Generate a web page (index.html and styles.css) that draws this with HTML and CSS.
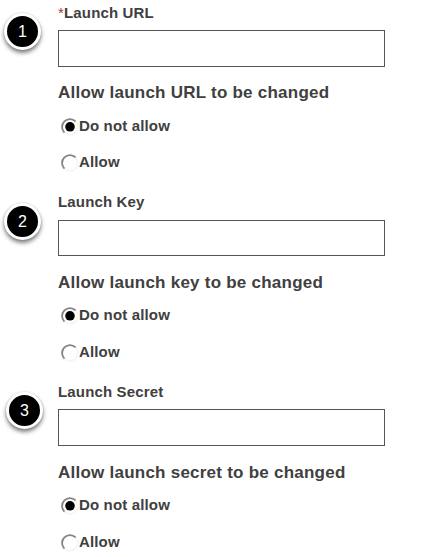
FILE: index.html
```
<!DOCTYPE html>
<html lang="en">
<head>
<meta charset="utf-8">
<title>Launch settings</title>
<link rel="stylesheet" href="styles.css">
</head>
<body>
<svg class="defs" aria-hidden="true">
  <symbol id="radio" viewBox="0 0 18 18">
    <circle cx="9" cy="9" r="7.9" fill="#fff" stroke="#f5f5f5" stroke-width="1.6"/>
    <path d="M3.4 14.6A7.9 7.9 0 0 1 14.6 3.4" fill="none" stroke="#838383" stroke-width="1.8"/>
  </symbol>
</svg>
<form class="form">
  <section class="group first">
    <span class="badge">1</span>
    <label class="label" for="url"><span class="required">*</span>Launch URL</label>
    <input class="field" id="url" type="text">
    <h2 class="heading">Allow launch URL to be changed</h2>
    <div class="option no"><svg class="radio"><use href="#radio"/><circle cx="9" cy="8.8" r="4.8"/></svg><span>Do not allow</span></div>
    <div class="option"><svg class="radio"><use href="#radio"/></svg><span>Allow</span></div>
  </section>
  <section class="group second">
    <span class="badge">2</span>
    <label class="label" for="key">Launch Key</label>
    <input class="field" id="key" type="text">
    <h2 class="heading">Allow launch key to be changed</h2>
    <div class="option no"><svg class="radio"><use href="#radio"/><circle cx="9" cy="8.8" r="4.8"/></svg><span>Do not allow</span></div>
    <div class="option"><svg class="radio"><use href="#radio"/></svg><span>Allow</span></div>
  </section>
  <section class="group third">
    <span class="badge">3</span>
    <label class="label" for="secret">Launch Secret</label>
    <input class="field" id="secret" type="text">
    <h2 class="heading">Allow launch secret to be changed</h2>
    <div class="option no"><svg class="radio"><use href="#radio"/><circle cx="9" cy="8.8" r="4.8"/></svg><span>Do not allow</span></div>
    <div class="option"><svg class="radio"><use href="#radio"/></svg><span>Allow</span></div>
  </section>
</form>
</body>
</html>
```
FILE: styles.css
```
* { box-sizing: border-box; }

body {
  margin: 0;
  overflow: hidden;
  background: #fff;
  color: #404040;
  font: bold 15px/18px "Liberation Sans", Arial, sans-serif;
}

.defs { display: none; }

.group {
  position: relative;
  display: flex;
  flex-direction: column;
  height: 190px;
  padding: 3px 40px 0 58px;
}

.group.first { padding-top: 4px; }

.third { height: 177px; }

.label {
  height: 27px;
  letter-spacing: 0.16px;
}

.first .label { height: 26px; }
.third .label { height: 26px; }

.required {
  color: #a33c32;
  font-weight: normal;
}

.field {
  flex: none;
  width: 327px;
  height: 37px;
  margin: 0;
  padding: 0 8px;
  border: 1px solid #555;
  border-radius: 0;
  background: #fff;
  font: inherit;
  outline: none;
}

.second .field { height: 36px; }

.heading {
  height: 20px;
  margin: 16px 0 0;
  font-size: 17px;
  line-height: 20px;
  letter-spacing: 0.24px;
  white-space: nowrap;
}

.second .heading,
.third .heading { margin-top: 17px; }

.option {
  display: flex;
  height: 18px;
  margin-top: 19px;
  padding-left: 3px;
  letter-spacing: 0.15px;
}

.option.no { margin-top: 13px; }
.first .option.no { margin-top: 14px; }
.first .option + .option { margin-top: 18px; }

.radio {
  flex: none;
  width: 18px;
  height: 18px;
  margin-top: 1px;
}

.badge {
  position: absolute;
  top: 13px;
  left: 4px;
  width: 37px;
  height: 37px;
  border: 3px solid #fff;
  border-radius: 50%;
  background: #000;
  box-shadow: 0 3px 4px 0 rgba(0, 0, 0, 0.5), 0 0 2px rgba(0, 0, 0, 0.2);
  color: #fff;
  font-weight: normal;
  font-size: 16px;
  line-height: 31px;
  text-align: center;
}

.third .badge {
  top: 12px;
  left: 6px;
}
```
